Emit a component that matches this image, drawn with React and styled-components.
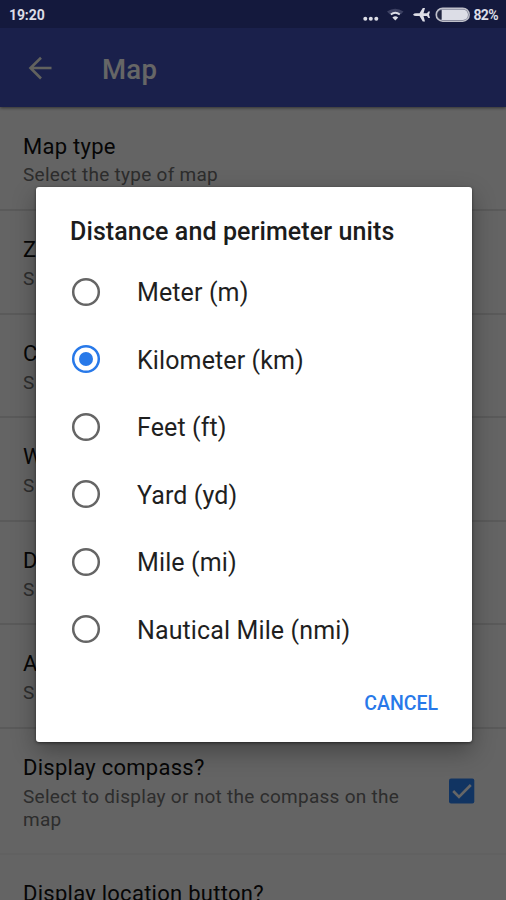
import React from "react";
import styled, { createGlobalStyle } from "styled-components";

const GlobalStyle = createGlobalStyle`
  * { box-sizing: border-box; }
  body { margin: 0; font-family: Roboto, sans-serif; overflow: hidden; }
`;

const Screen = styled.div`
  position: relative;
  width: 506px;
  height: 900px;
  overflow: hidden;
  background: #fafafa;
  display: flex;
  flex-direction: column;
`;

const StatusBar = styled.div`
  position: relative;
  z-index: 2;
  flex: none;
  height: 28px;
  padding: 2px 8px 0 9px;
  display: flex;
  align-items: center;
  background: #14193d;
  color: #dcdde6;
  font-size: 14px;
  line-height: 26px;
  font-weight: 700;
`;

const Clock = styled.span`
  flex: 1;
  letter-spacing: -0.1px;
`;

const Battery = styled.span`
  width: 25px;
  display: flex;
  justify-content: flex-end;
  white-space: nowrap;
  font-size: 14px;
  letter-spacing: -0.6px;
`;

const StatusIcons = styled.svg`
  display: block;
  margin-right: 2px;
`;

const Toolbar = styled.header`
  flex: none;
  height: 79px;
  padding: 2px 24px 0 24px;
  display: flex;
  align-items: center;
  gap: 46px;
  background: #4252bb;
  color: #fff;
  box-shadow: 0 1px 3px rgba(0, 0, 0, 0.5);
`;

const Title = styled.h1`
  margin: 2px 0 0;
  font-size: 27.5px;
  font-weight: 500;
  letter-spacing: 0.3px;
`;

const Settings = styled.main`
  flex: 1;
  min-height: 0;
  overflow: hidden;
`;

const Setting = styled.section`
  height: ${(p) => p.$height}px;
  padding: 25px 31px 0 23px;
  display: flex;
  justify-content: space-between;
  border-bottom: 2px solid ${(p) => (p.$faint ? "#f2f2f2" : "#e0e0e0")};
`;

const SettingName = styled.div`
  padding-top: ${(p) => (p.$first ? 1 : 0)}px;
  height: 28px;
  font-size: 22px;
  line-height: 28px;
  letter-spacing: 0.27px;
  color: #101010;
  white-space: nowrap;
`;

const SettingNote = styled.div`
  width: 400px;
  margin-top: 3px;
  font-size: 19px;
  line-height: 23px;
  letter-spacing: 0.28px;
  color: #707070;
`;

const Checkbox = styled.svg`
  flex: none;
  margin-top: 24px;
`;

const Scrim = styled.div`
  position: absolute;
  inset: 0;
  background: rgba(0, 0, 0, 0.6);
`;

const Dialog = styled.div`
  position: absolute;
  z-index: 3;
  left: 36px;
  top: 187px;
  width: 436px;
  height: 555px;
  padding: 29px 34px 0;
  border-radius: 3px;
  background: #fff;
  box-shadow: 0 9px 24px rgba(0, 0, 0, 0.32), 0 1px 3px rgba(0, 0, 0, 0.5);
  display: flex;
  flex-direction: column;
`;

const DialogTitle = styled.h2`
  margin: 0 0 14px;
  font-size: 25px;
  line-height: 32px;
  font-weight: 500;
  letter-spacing: 0.1px;
  color: #1c1c1c;
  white-space: nowrap;
`;

const Option = styled.div`
  height: 67.5px;
  margin-top: ${(p) => (p.$first ? -4 : 0)}px;
  display: flex;
  align-items: center;
  gap: 35px;
  font-size: 25px;
  letter-spacing: 0.12px;
  color: #1f1f1f;
`;

const OptionLabel = styled.span`
  padding-top: 2px;
`;

const Radio = styled.svg`
  flex: none;
`;

const Actions = styled.div`
  display: flex;
  justify-content: flex-end;
`;

const Cancel = styled.button`
  margin: 27px 0 0;
  padding: 0;
  border: 0;
  background: none;
  font: 500 19.5px/28px Roboto, sans-serif;
  color: #2879e9;
`;

const settings = [
  { name: "Map type", note: "Select the type of map", height: 104 },
  { name: "Z", note: "S", height: 103.5 },
  { name: "C", note: "S", height: 103.5 },
  { name: "W", note: "S", height: 103.5 },
  { name: "D", note: "S", height: 103.5 },
  { name: "A", note: "S", height: 103.5 },
  {
    name: "Display compass?",
    note: "Select to display or not the compass on the map",
    height: 126,
    checked: true,
    faint: true,
  },
  { name: "Display location button?", height: 104 },
];

const units = ["Meter (m)", "Kilometer (km)", "Feet (ft)", "Yard (yd)", "Mile (mi)", "Nautical Mile (nmi)"];

function RadioMark({ on }) {
  const color = on ? "#2879e9" : "#656565";
  return (
    <Radio width="32" height="32" viewBox="0 0 32 32">
      <circle cx="16" cy="16" r="12.8" fill="none" stroke={color} strokeWidth="2.5" />
      {on && <circle cx="16" cy="16" r="7" fill={color} />}
    </Radio>
  );
}

export default function App() {
  return (
    <Screen>
      <GlobalStyle />
      <StatusBar>
        <Clock>19:20</Clock>
        <StatusIcons width="110" height="26" viewBox="0 0 110 26">
          <g fill="#dcdde6">
            <circle cx="4.3" cy="16.8" r="2" />
            <circle cx="9.8" cy="16.8" r="2" />
            <circle cx="15.3" cy="16.8" r="2" />
          </g>
          <path d="M26 9.5Q34 4 42.5 9.5L40 12.3Q34.3 8.5 28.7 12.3Z" fill="#3c4062" />
          <path d="M29.8 12.6Q34.3 9 38.8 12.6" fill="none" stroke="#dcdde6" strokeWidth="1.9" />
          <path d="M31.4 15.4Q34.3 13.2 37.2 15.4L34.3 18.6Z" fill="#dcdde6" />
          <path d="M52 12.7Q53 11.3 55 11.3H58.5L61.8 6H64L62.5 11.3H66L67.4 9.4H69L68 12.7L69 16H67.4L66 14.1H62.5L64 19.4H61.8L58.5 14.1H55Q53 14.1 52 12.7Z" fill="#dcdde6" />
          <rect x="75.2" y="6.2" width="33" height="13" rx="6.5" fill="#555873" stroke="#bfc0ca" strokeWidth="1.5" />
          <path d="M80.5 7.4H102Q107 8 107 12.7T102 18H80.5Z" fill="#dcdde6" />
          <path d="M80.5 8Q76.5 9 76.5 12.7T80.5 17.5Z" fill="#20243f" />
        </StatusIcons>
        <Battery>82%</Battery>
      </StatusBar>
      <Toolbar>
        <svg width="32" height="32" viewBox="0 0 32 32" fill="none" stroke="#f4f4ea" strokeWidth="2.6">
          <path d="M27.5 15H6.5M17 4.8L6.5 15L17 25.5" />
        </svg>
        <Title>Map</Title>
      </Toolbar>
      <Settings>
        {settings.map((s, i) => (
          <Setting key={s.name} $height={s.height} $faint={s.faint}>
            <div>
              <SettingName $first={i === 0}>{s.name}</SettingName>
              {s.note && <SettingNote>{s.note}</SettingNote>}
            </div>
            {s.checked && (
              <Checkbox width="26" height="26" viewBox="0 0 26 26">
                <rect x="0" y="0.5" width="25.3" height="25" rx="2" fill="#2c82f5" />
                <path d="M4.2 13L10 18.8L21.8 7" fill="none" stroke="#fff" strokeWidth="2.6" />
              </Checkbox>
            )}
          </Setting>
        ))}
      </Settings>
      <Scrim />
      <Dialog role="dialog">
        <DialogTitle>Distance and perimeter units</DialogTitle>
        {units.map((u, i) => (
          <Option key={u} $first={i === 0}>
            <RadioMark on={i === 1} />
            <OptionLabel>{u}</OptionLabel>
          </Option>
        ))}
        <Actions>
          <Cancel>CANCEL</Cancel>
        </Actions>
      </Dialog>
    </Screen>
  );
}
